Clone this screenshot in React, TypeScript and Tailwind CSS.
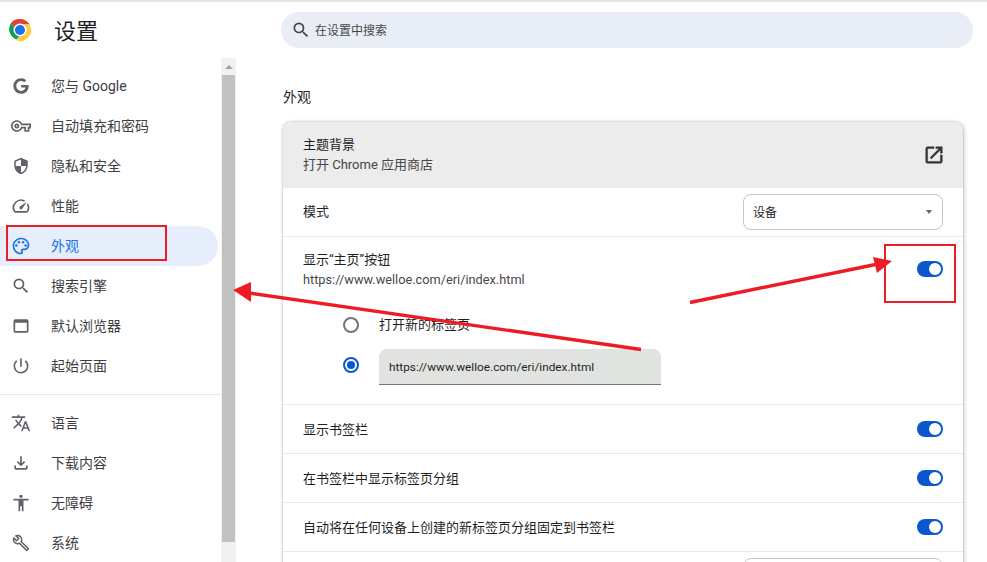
import type { ReactNode } from "react";
import {
  MdAccessibility,
  MdOutlineBuild,
  MdOutlineFileDownload,
  MdOutlinePalette,
  MdOutlineSpeed,
  MdOutlineVpnKey,
  MdPowerSettingsNew,
  MdSearch,
  MdSecurity,
  MdTranslate,
  MdWebAsset,
} from "react-icons/md";
import { FaGoogle } from "react-icons/fa";

const URL_TEXT = "https://www.welloe.com/eri/index.html";

function ChromeLogo() {
  return (
    <svg width="24" height="24" viewBox="0 0 48 48" className="shrink-0">
      <path d="M24 2a22 22 0 0 1 19.05 11H24a11 11 0 0 0-10.4 7.4L5.6 10.4A22 22 0 0 1 24 2z" fill="#db4437" />
      <path d="M5.6 10.4l8 10A11 11 0 0 0 24 35l-6.6 8A22 22 0 0 1 5.6 10.4z" fill="#0f9d58" />
      <path d="M43.05 13A22 22 0 0 1 17.4 45L24 35a11 11 0 0 0 9.5-16.5L30 13z" fill="#ffcd40" />
      <circle cx="24" cy="24" r="13" fill="#fff" />
      <circle cx="24" cy="24" r="10" fill="#1a73e8" />
    </svg>
  );
}

function OpenInNew() {
  return (
    <svg width="22" height="22" viewBox="0 0 24 24" className="-mr-[2px] text-[#333]">
      <path
        d="M19 19H5V5h7V3H5a2 2 0 0 0-2 2v14a2 2 0 0 0 2 2h14c1.1 0 2-.9 2-2v-7h-2v7zM14 3v2h3.59l-9.83 9.83 1.41 1.41L19 6.41V10h2V3h-7z"
        fill="currentColor"
        stroke="currentColor"
        strokeWidth="0.5"
      />
    </svg>
  );
}

function NavItem({ icon, label, active }: { icon: ReactNode; label: string; active?: boolean }) {
  return (
    <div
      className={
        active
          ? "flex h-10 w-[218px] items-center gap-5 rounded-r-full bg-[#e6edfb] pl-[11px] text-[14px] text-[#1a73e8]"
          : "flex h-10 items-center gap-5 pl-[11px] text-[14px] text-[#3c4043]"
      }
    >
      <span className={active ? "flex w-5 justify-center text-[#1a73e8]" : "flex w-5 justify-center text-[#5f6368]"}>
        {icon}
      </span>
      <span>{label}</span>
    </div>
  );
}

function Toggle() {
  return (
    <div className="flex h-4 w-[26px] shrink-0 items-center justify-end rounded-full bg-[#0b57d0] pr-[2px]">
      <div className="h-3 w-3 rounded-full bg-white" />
    </div>
  );
}

function ToggleRow({ label }: { label: string }) {
  return (
    <div className="flex h-[49px] items-center justify-between border-b border-[#e8e8e8] px-5 text-[13px] text-[#1f1f1f]">
      <span className="pt-px">{label}</span>
      <Toggle />
    </div>
  );
}

export default function App() {
  return (
    <div
      className="flex h-[562px] w-[987px] overflow-hidden border-t-2 border-[#e6e6e6] bg-white"
      style={{ fontFamily: 'Roboto, "Noto Sans CJK SC", sans-serif' }}
    >
      {/* sidebar */}
      <div className="flex w-[236px] shrink-0 flex-col">
        <div className="flex h-14 items-center gap-[22px] pl-2">
          <ChromeLogo />
          <span className="mt-[2px] text-[22px] text-[#1f1f1f]">设置</span>
        </div>
        <div className="flex min-h-0 flex-1">
          <nav className="w-[221px] pt-2">
            <NavItem icon={<FaGoogle size={16} />} label="您与 Google" />
            <NavItem icon={<MdOutlineVpnKey size={20} />} label="自动填充和密码" />
            <NavItem icon={<MdSecurity size={18} />} label="隐私和安全" />
            <NavItem icon={<MdOutlineSpeed size={20} />} label="性能" />
            <NavItem icon={<MdOutlinePalette size={20} />} label="外观" active />
            <NavItem icon={<MdSearch size={20} />} label="搜索引擎" />
            <NavItem icon={<MdWebAsset size={20} />} label="默认浏览器" />
            <NavItem icon={<MdPowerSettingsNew size={20} />} label="起始页面" />
            <div className="my-2 border-t border-[#e8e8e8]" />
            <NavItem icon={<MdTranslate size={20} />} label="语言" />
            <NavItem icon={<MdOutlineFileDownload size={20} />} label="下载内容" />
            <NavItem icon={<MdAccessibility size={20} />} label="无障碍" />
            <NavItem icon={<MdOutlineBuild size={18} />} label="系统" />
          </nav>
          <div className="flex w-[15px] flex-col items-center bg-[#f1f1f1]">
            <div className="flex h-[17px] items-center justify-center">
              <div className="h-0 w-0 border-x-[4px] border-b-[4px] border-x-transparent border-b-[#a3a3a3]" />
            </div>
            <div className="h-[467px] w-[13px] bg-[#c1c1c1]" />
          </div>
        </div>
      </div>

      {/* main column */}
      <div className="flex-1 pl-[45px]">
        <div className="mt-[10px] flex h-9 w-[692px] items-center gap-1 rounded-full bg-[#e9eef6] pl-[10px] text-[12px] text-[#474747]">
          <MdSearch size={20} className="text-[#444746]" />
          <span className="pt-[2px]">在设置中搜索</span>
        </div>

        <div className="ml-[2px] mb-[15px] mt-[39px] text-[14px] leading-5 text-[#1f1f1f]">外观</div>

        <div className="ml-[2px] w-[680px] rounded-t-lg bg-white shadow-[0_0_2px_rgba(0,0,0,0.3),1px_1px_5px_rgba(0,0,0,0.2)]">
          <div className="flex h-[66px] items-center justify-between rounded-t-lg bg-[#ececec] px-5">
            <div className="text-[13px] leading-5">
              <div className="text-[#1f1f1f]">主题背景</div>
              <div className="text-[#474747]">打开 Chrome 应用商店</div>
            </div>
            <OpenInNew />
          </div>

          <div className="flex h-[49px] items-center justify-between border-b border-[#e8e8e8] px-5 text-[13px] text-[#1f1f1f]">
            <span>模式</span>
            <div className="flex h-9 w-[200px] items-center justify-between rounded-lg border border-[#c4c7c5] pl-[9px] pr-[10px] text-[12px] text-[#1f1f1f]">
              <span className="pt-[2px]">设备</span>
              <div className="h-0 w-0 border-x-[3.5px] border-t-[4px] border-x-transparent border-t-[#5f6368]" />
            </div>
          </div>

          <div className="border-b border-[#e8e8e8]">
            <div className="flex h-16 items-center justify-between px-5">
              <div className="pt-px text-[13px] leading-5">
                <div className="text-[#1f1f1f]">显示“主页”按钮</div>
                <div className="text-[12.75px] text-[#474747]">{URL_TEXT}</div>
              </div>
              <Toggle />
            </div>
            <div className="pb-[19px] pl-[60px] pt-1">
              <div className="flex h-10 items-center gap-5 text-[13px] text-[#1f1f1f]">
                <div className="h-4 w-4 rounded-full border-2 border-[#757575]" />
                <span>打开新的标签页</span>
              </div>
              <div className="mt-1 flex items-start gap-5">
                <div className="mt-2 flex h-4 w-4 items-center justify-center rounded-full border-2 border-[#0b57d0]">
                  <div className="h-2 w-2 rounded-full bg-[#0b57d0]" />
                </div>
                <div className="flex h-9 w-[282px] items-center rounded-t-lg border-b border-[#747775] bg-[#e1e3e1] pl-[10px] pt-[2px] text-[11.8px] text-[#1f1f1f]">
                  {URL_TEXT}
                </div>
              </div>
            </div>
          </div>

          <ToggleRow label="显示书签栏" />
          <ToggleRow label="在书签栏中显示标签页分组" />
          <ToggleRow label="自动将在任何设备上创建的新标签页分组固定到书签栏" />

          <div className="flex h-[49px] justify-end px-5 pt-[6px]">
            <div className="h-9 w-[200px] rounded-lg border border-[#c4c7c5]" />
          </div>
        </div>
      </div>

      {/* annotation drawn on top of the screenshot */}
      <div className="absolute left-[6px] top-[225px] h-[36px] w-[161px] border-2 border-[#ed1c24]" />
      <div className="absolute left-[884px] top-[244px] h-[59px] w-[72px] border-2 border-[#ed1c24]" />
      <svg className="pointer-events-none absolute left-0 top-0" width="987" height="562">
        <line x1="641" y1="349.5" x2="249" y2="293" stroke="#ed1c24" strokeWidth="3.4" />
        <polygon points="233,290 251,282 251,302" fill="#ed1c24" />
        <line x1="690" y1="302.5" x2="878" y2="264" stroke="#ed1c24" strokeWidth="3.4" />
        <polygon points="892,261 873,257 877,273" fill="#ed1c24" />
      </svg>
    </div>
  );
}
